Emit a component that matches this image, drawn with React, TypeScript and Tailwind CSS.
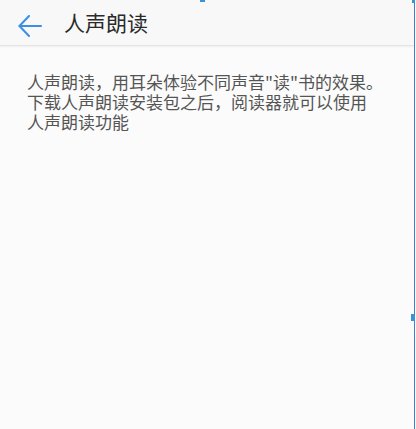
const cjk = { fontFamily: '"Noto Sans CJK SC", "Noto Sans", sans-serif' };

function BackArrow() {
  return (
    <svg width="24" height="22" viewBox="0 0 24 22" fill="none" stroke="#3b8fe6" strokeWidth="2" strokeLinecap="round" strokeLinejoin="round">
      <path d="M23 11H1.5" />
      <path d="M11 1 1.5 11 11 21" />
    </svg>
  );
}

export default function App() {
  return (
    <div className="relative flex h-[429px] w-[416px] bg-white" style={cjk}>
      <div className="flex w-[414px] flex-col bg-[#fbfbfb]">
        <div className="flex h-[46px] items-center border-b border-[#e4e4e4] bg-[#f8f8f8] shadow-[0_1px_2px_rgba(0,0,0,0.05)]">
          <div className="ml-[18px] mt-[6px]">
            <BackArrow />
          </div>
          <h1 className="ml-[22px] text-[21px] leading-none text-[#2a2a2a]">人声朗读</h1>
        </div>
        <div className="px-[27px] pt-[26px] text-[17px] leading-[20px] text-[#555]">
          <p>人声朗读，用耳朵体验不同声音"读"书的效果。</p>
          <p>下载人声朗读安装包之后，阅读器就可以使用</p>
          <p>人声朗读功能</p>
        </div>
      </div>
      <div className="w-[1px] bg-[#3f7fd0]" />
      {/* selection handles */}
      <div className="absolute left-[200px] top-0 h-[2px] w-[5px] bg-[#3a93d6]" />
      <div className="absolute left-[412px] top-0 h-[3px] w-[3px] bg-[#3a93d6]" />
      <div className="absolute left-[411px] top-[314px] h-[7px] w-[4px] bg-[#3a93d6]" />
    </div>
  );
}
